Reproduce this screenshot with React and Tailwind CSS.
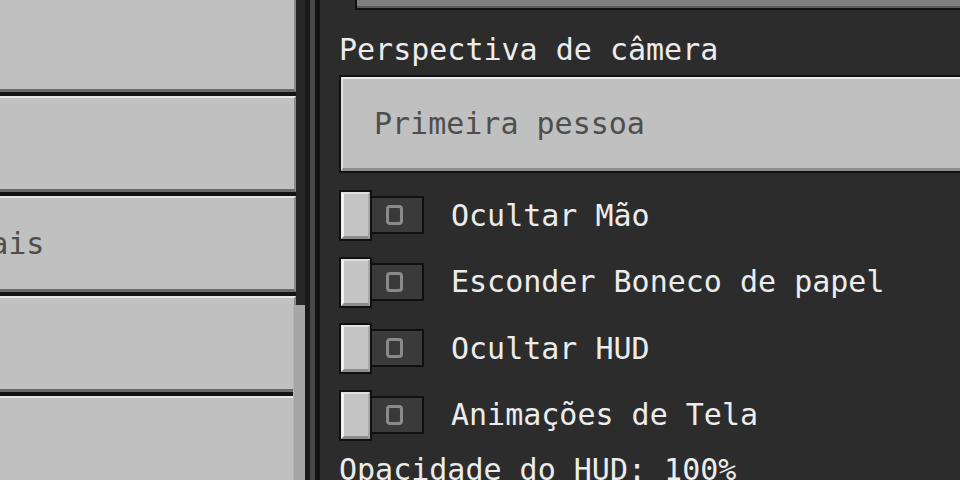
import React from "react";

function LeftButton({ children }) {
  return (
    <div className="h-[100px] flex flex-col shrink-0">
      <div className="flex-1 bg-[#c0c0c0] border-t-2 border-t-[#e6e6e6] border-b-[3px] border-b-[#6a6a6a] border-r-2 border-r-[#8a8a8a] flex items-center overflow-hidden">
        {children}
      </div>
      <div className="h-[4px] bg-[#141414]" />
    </div>
  );
}

function Toggle({ label }) {
  return (
    <div className="flex items-center h-[66.5px] shrink-0">
      <div className="relative w-[85px] h-[51px] shrink-0">
        <div className="absolute left-[31px] top-[6px] w-[54px] h-[38px] bg-[#3a3a3a] border-2 border-[#101010] flex items-center justify-center">
          <div className="shrink-0 w-[17px] h-[20px] border-[3px] border-[#8a8a8a] rounded-[4px] -ml-[6px]" />
        </div>
        <div className="absolute left-0 top-0 w-[33px] h-[51px] border-2 border-[#101010] bg-[#c5c5c5]">
          <div className="w-full h-full border-l-[3px] border-l-[#f0f0f0] border-t-2 border-t-[#dedede] border-b-[3px] border-b-[#8c8c8c] border-r-2 border-r-[#a8a8a8]" />
        </div>
      </div>
      <span className="ml-[27px] whitespace-nowrap">{label}</span>
    </div>
  );
}

export default function App() {
  return (
    <div className="w-[960px] h-[480px] overflow-hidden flex bg-[#2c2c2c] font-['DejaVu_Sans_Mono',monospace] text-[30px] leading-[30px]">
      {/* Left column */}
      <div className="w-[296px] shrink-0 flex flex-col -mt-[4px]">
        <LeftButton />
        <LeftButton />
        <LeftButton>
          <span className="-ml-[64px] whitespace-nowrap text-[#4e4e4e]">Gerais</span>
        </LeftButton>
        <LeftButton />
        <LeftButton />
      </div>
      {/* Scrollbar */}
      <div className="w-[9px] shrink-0 bg-[#262626] flex flex-col">
        <div className="mt-[305px] flex-1 -ml-[3px] relative z-10 bg-[#a6a6a6] border-l border-l-[#b4b4b4]" />
      </div>
      {/* Divider */}
      <div className="w-[5px] shrink-0 bg-[#1a1a1a]" />
      <div className="w-[5px] shrink-0 bg-[#474747]" />
      <div className="w-[5px] shrink-0 bg-[#121212]" />
      {/* Right panel */}
      <div className="flex-1 overflow-hidden flex flex-col pl-[19px] text-[#ececec]">
        <div className="ml-[16px] h-[10px] shrink-0 border-l-2 border-b-2 border-[#111111] bg-[#7f7f7f]">
          <div className="h-full border-b-2 border-b-[#5a5a5a]" />
        </div>
        <div className="mt-[24.5px] whitespace-nowrap shrink-0">Perspectiva de câmera</div>
        <div className="mt-[10.5px] h-[98px] shrink-0 -mr-[20px] border-2 border-[#111111]">
          <div className="h-full bg-[#c0c0c0] border-t-2 border-t-[#e8e8e8] border-l-2 border-l-[#e2e2e2] border-b-[3px] border-b-[#8c8c8c] flex items-center pl-[31px] text-[#4e4e4e] whitespace-nowrap">
            Primeira pessoa
          </div>
        </div>
        <div className="mt-[9.5px] flex flex-col shrink-0">
          <Toggle label="Ocultar Mão" />
          <Toggle label="Esconder Boneco de papel" />
          <Toggle label="Ocultar HUD" />
          <Toggle label="Animações de Tela" />
        </div>
        <div className="mt-[6px] whitespace-nowrap shrink-0">Opacidade do HUD: 100%</div>
      </div>
    </div>
  );
}
